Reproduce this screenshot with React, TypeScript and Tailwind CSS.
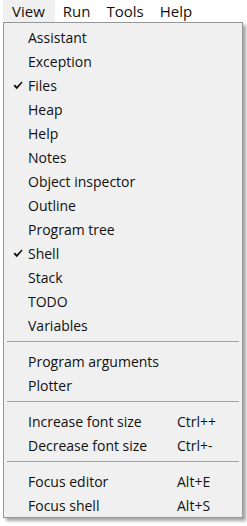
import React from "react";

type Item = { label: string; checked?: boolean; shortcut?: string } | "sep";

const items: Item[] = [
  { label: "Assistant" },
  { label: "Exception" },
  { label: "Files", checked: true },
  { label: "Heap" },
  { label: "Help" },
  { label: "Notes" },
  { label: "Object inspector" },
  { label: "Outline" },
  { label: "Program tree" },
  { label: "Shell", checked: true },
  { label: "Stack" },
  { label: "TODO" },
  { label: "Variables" },
  "sep",
  { label: "Program arguments" },
  { label: "Plotter" },
  "sep",
  { label: "Increase font size", shortcut: "Ctrl++" },
  { label: "Decrease font size", shortcut: "Ctrl+-" },
  "sep",
  { label: "Focus editor", shortcut: "Alt+E" },
  { label: "Focus shell", shortcut: "Alt+S" },
];

function Check() {
  return (
    <svg width="10" height="9" viewBox="0 0 10 9" className="block">
      <path d="M0.5 4.8 L2 3.4 L3.8 5.4 L8.6 0.4 L9.6 1.6 L3.8 8.2 Z" fill="#111" />
    </svg>
  );
}

export default function App() {
  return (
    <div
      className="w-[247px] h-[526px] bg-white overflow-hidden text-[#111]"
      style={{ fontFamily: '"Open Sans", "Noto Sans", sans-serif' }}
    >
      <div className="flex h-[22px] items-center text-[15px] leading-none">
        <div className="h-full flex items-center bg-[#f0f0f0] ml-[3px] pl-[9px] pr-[10px]">View</div>
        <div className="pl-[8px]">Run</div>
        <div className="pl-[16px]">Tools</div>
        <div className="pl-[16px]">Help</div>
      </div>
      <div className="flex">
        <div className="w-[3px] shrink-0" />
        <div className="w-[240px] border border-[#979797] bg-[#f0f0f0] pt-[2px] shadow-[3px_3px_3px_rgba(0,0,0,0.35)] text-[14px]">
          {items.map((it, i) =>
            it === "sep" ? (
              <div key={i} className="h-[12px] flex items-center px-[3px]">
                <div className="w-full h-px bg-[#a0a0a0] mt-[-3px]" />
              </div>
            ) : (
              <div key={i} className="h-[24px] flex items-center">
                <div className="w-[24px] flex justify-end pr-[5px] shrink-0">
                  {it.checked ? <Check /> : null}
                </div>
                <div className="flex-1 whitespace-nowrap">{it.label}</div>
                {it.shortcut ? (
                  <div className="w-[65px] whitespace-nowrap">{it.shortcut}</div>
                ) : null}
              </div>
            )
          )}
        </div>
      </div>
    </div>
  );
}
